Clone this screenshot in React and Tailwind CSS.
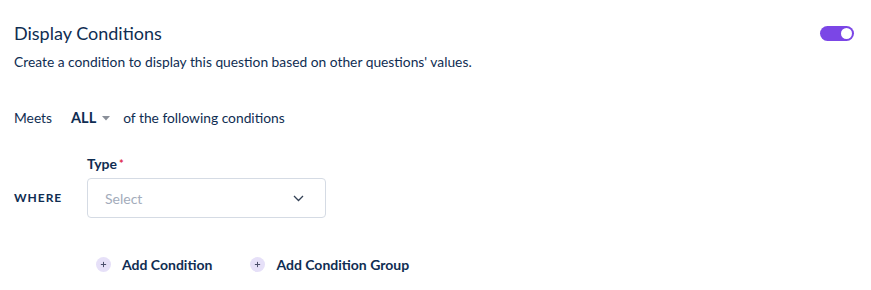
import React from 'react';

const Plus = () => (
  <span className="w-[15px] h-[15px] rounded-full bg-[#e6e0f8] flex items-center justify-center shrink-0">
    <svg width="7" height="7" viewBox="0 0 8 8" stroke="#4b4f6b" strokeWidth="1.2" fill="none">
      <line x1="4" y1="1" x2="4" y2="7" />
      <line x1="1" y1="4" x2="7" y2="4" />
    </svg>
  </span>
);

export default function App() {
  return (
    <div className="w-[871px] h-[290px] bg-white text-[#0f2d52] font-['Lato','Noto_Sans',sans-serif] px-[14px] pt-[20px] overflow-hidden">
      <div className="flex items-center justify-between">
        <h1 className="text-[18px] leading-[26px]">Display Conditions</h1>
        <div className="w-[34px] h-[15px] rounded-full bg-[#7b46e6] flex items-center justify-end pr-[2px] mr-[3px]">
          <span className="w-[11px] h-[11px] rounded-full bg-white" />
        </div>
      </div>
      <p className="text-[13.8px] leading-[20px] mt-[6px]">Create a condition to display this question based on other questions' values.</p>

      <div className="flex items-center mt-[36px] text-[13.8px] leading-[20px]">
        <span>Meets</span>
        <span className="ml-[19px] font-bold text-[14.5px]">ALL</span>
        <svg className="ml-[6px]" width="8" height="5" viewBox="0 0 8 5" fill="#8a8f99">
          <path d="M0 0h8L4 4.5z" />
        </svg>
        <span className="ml-[13px]">of the following conditions</span>
      </div>

      <div className="mt-[27px] pl-[73px] text-[14px] font-bold leading-[18px]">
        Type<span className="text-[#e0284a] text-[11px] align-top ml-[2px]">*</span>
      </div>
      <div className="flex items-center mt-[5px]">
        <span className="w-[73px] shrink-0 text-[12px] font-bold tracking-[0.08em]">WHERE</span>
        <div className="w-[239px] h-[40px] border border-[#d5dbe4] rounded-[4px] flex items-center justify-between pl-[17px] pr-[21px]">
          <span className="text-[14px] text-[#a3acbb]">Select</span>
          <svg width="11" height="7" viewBox="0 0 11 7" fill="none" stroke="#334155" strokeWidth="1.3">
            <path d="M1 1l4.5 4.5L10 1" />
          </svg>
        </div>
      </div>

      <div className="flex items-center mt-[36px] ml-[82px] text-[14px] font-bold">
        <Plus />
        <span className="ml-[11px]">Add Condition</span>
        <span className="ml-[38px]"><Plus /></span>
        <span className="ml-[11px]">Add Condition Group</span>
      </div>
    </div>
  );
}
